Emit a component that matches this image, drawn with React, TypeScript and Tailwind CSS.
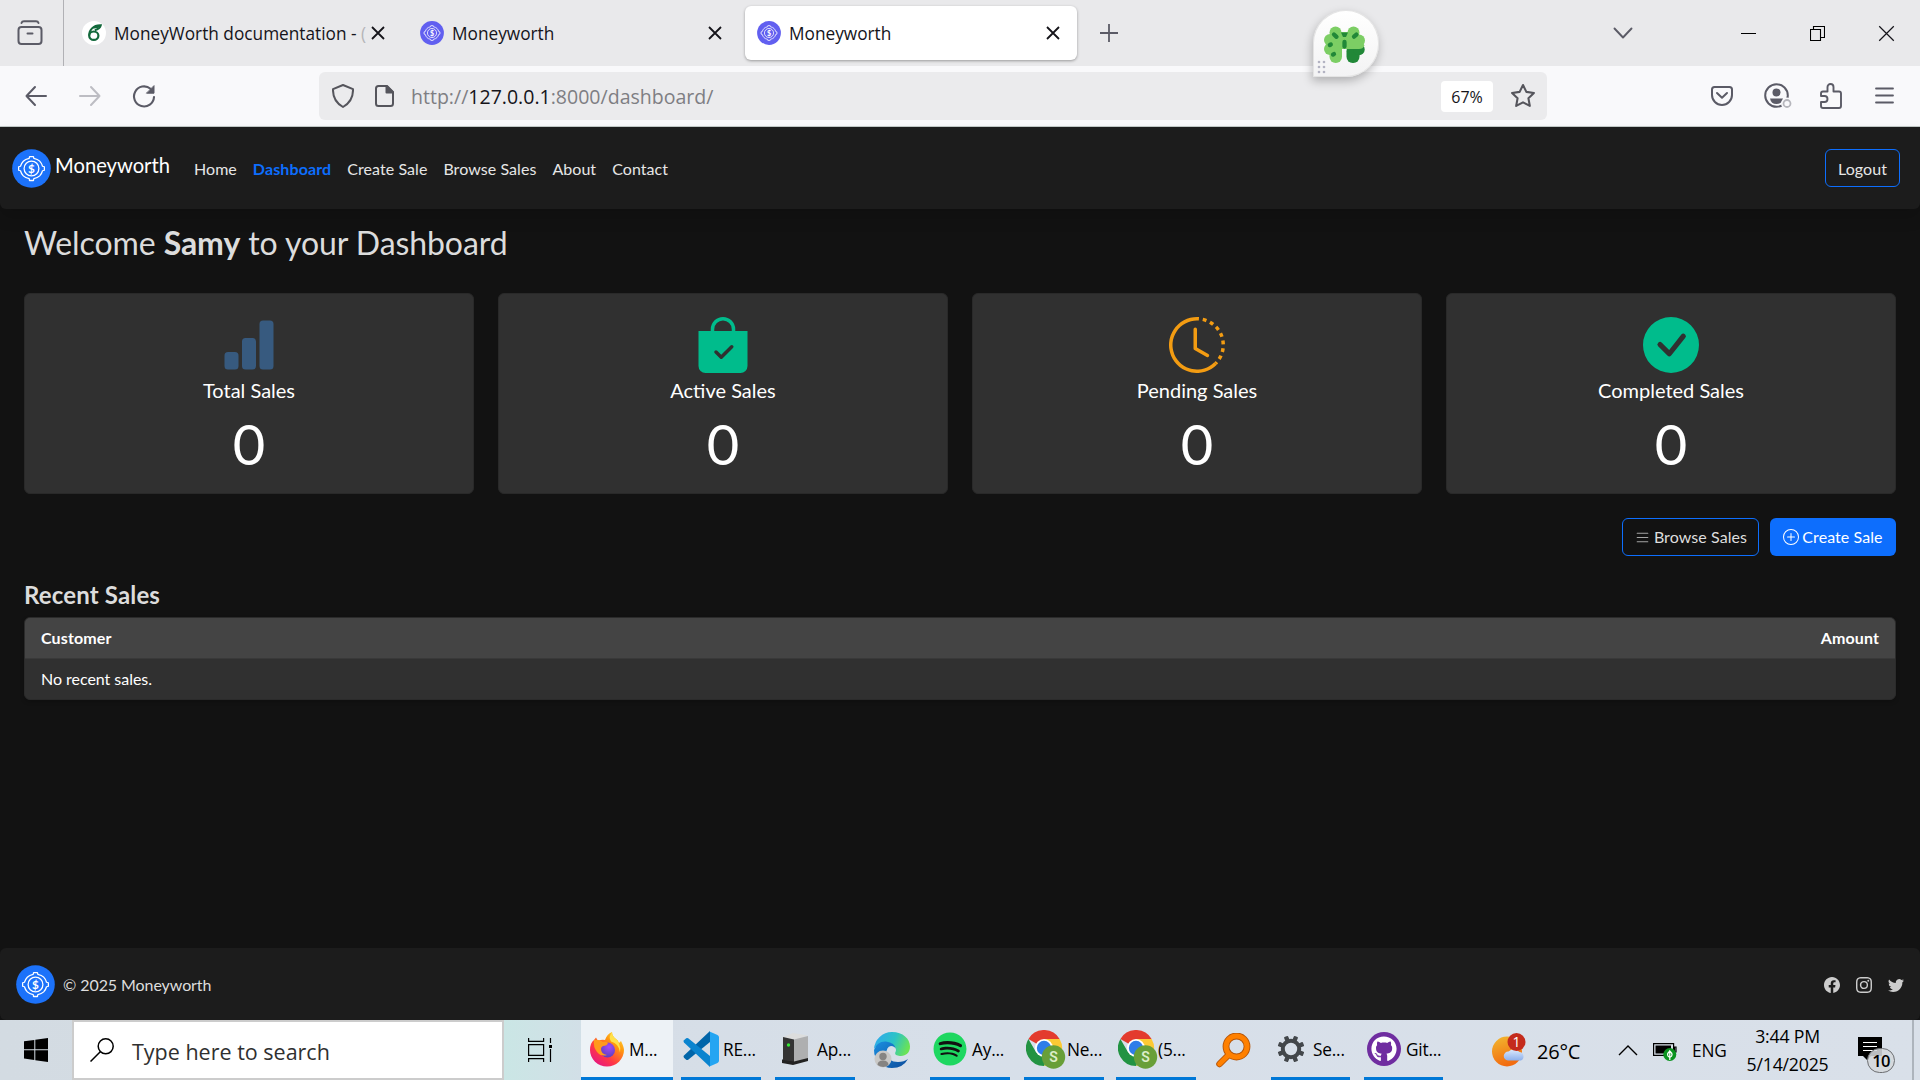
import type { ReactNode } from 'react';
import {
  BsBarChartFill, BsBagCheckFill, BsClockHistory, BsCheckCircleFill, BsList,
  BsPlusCircle, BsFacebook, BsInstagram, BsTwitter,
} from 'react-icons/bs';
import { FaGithub, FaSpotify } from 'react-icons/fa';

function CoinLogo({ size, bg }: { size: number; bg: string }) {
  return (
    <svg width={size} height={size} viewBox="0 0 40 40" className="shrink-0">
      <circle cx="20" cy="20" r="19.8" fill={bg} />
      <g fill="none" stroke="#fff" strokeWidth="1.3" strokeLinejoin="round">
        <path d="M17.6 9.6 18 7.8h4l.4 1.8q4 .8 6 2.9 2.100 2.200 2.900 5.200l1.900.5v3.600l-1.900.5q-.8 3.100-2.900 5.300-2.100 2.100-6 2.900l-.4 1.800h-4l-.4-1.800q-4-.8-6-2.900-2.100-2.200-2.900-5.300l-1.900-.5v-3.600l1.900-.5q.8-3 2.900-5.200 2-2.100 6-2.900Z" />
        <circle cx="20" cy="20" r="7.600" />
      </g>
      <text x="20" y="24.400" textAnchor="middle" fontSize="12" fontWeight="700" fontFamily="Lato, sans-serif" fill="#fff">$</text>
    </svg>
  );
}

function CloseX({ size = 14, w = 1.8 }: { size?: number; w?: number }) {
  return (
    <svg width={size} height={size} viewBox="0 0 14 14" className="shrink-0" stroke="#15141a" strokeWidth={w} fill="none">
      <path d="M1 1l12 12M13 1L1 13" />
    </svg>
  );
}

function BrowserTabs() {
  return (
    <div className="relative flex h-[66px] items-center bg-[#e9e9eb] text-[17.25px] text-[#15141a]">
      <div className="flex h-full w-16 items-center justify-center border-r border-[#b1b1b5] pr-1">
        <svg width="26" height="28" viewBox="0 0 26 26" fill="none" stroke="#5b5b66" strokeWidth="2" strokeLinecap="round">
          <path d="M4.500 3q.5-1.700 2.500-1.700h12q2 0 2.500 1.700" />
          <rect x="1.500" y="7" width="23" height="17" rx="3" />
          <path d="M10.500 13.500h5" />
        </svg>
      </div>
      <div className="flex h-full w-[342px] items-center pl-[18px]">
        <svg width="24" height="24" viewBox="0 0 24 24">
          <circle cx="12" cy="12" r="12" fill="#fff" />
          <ellipse cx="11.800" cy="14.700" rx="4.600" ry="4.200" fill="none" stroke="#13693c" strokeWidth="2.200" />
          <path d="M7.200 14.500C7 9.500 11 4 18.800 4.300c-.6 2.600-3 4.200-6 5" fill="none" stroke="#13693c" strokeWidth="2" />
          <path d="M10.500 7.500C13 4 16 3.600 19 4.200c-1 2.400-3.500 3.300-8.500 3.300Z" fill="#13693c" />
        </svg>
        <div className="ml-[8px] mt-[2px] w-[254px] overflow-hidden whitespace-pre">
          MoneyWorth documentation - <span className="text-[#b5b5b8]">(</span>
        </div>
        <div className="ml-[3px]"><CloseX /></div>
      </div>
      <div className="flex h-full w-[339px] items-center pl-[14px]">
        <CoinLogo size={24} bg="#615ff0" />
        <span className="ml-[8px] mt-[2px] flex-1">Moneyworth</span>
        <span className="mr-[23px]"><CloseX /></span>
      </div>
      <div className="flex h-[54px] w-[332px] items-center rounded-md bg-white pl-[12px] shadow-[0_1px_3px_rgba(0,0,0,0.35)]">
        <CoinLogo size={24} bg="#615ff0" />
        <span className="ml-[8px] mt-[2px] flex-1">Moneyworth</span>
        <span className="mr-[17px]"><CloseX /></span>
      </div>
      <svg width="20" height="20" viewBox="0 0 20 20" className="ml-[22px]" stroke="#5b5b66" strokeWidth="1.800"><path d="M10 1v18M1 10h18" /></svg>
      <div className="ml-auto flex items-center pr-[25px]">
        <svg width="20" height="12" viewBox="0 0 20 12" className="mr-[108px]" fill="none" stroke="#5b5b66" strokeWidth="1.900" strokeLinecap="round" strokeLinejoin="round"><path d="M1.500 1.500 10 10.500l8.500-9" /></svg>
        <div className="mr-[54px] h-px w-[15px] bg-black" />
        <svg width="15" height="15" viewBox="0 0 15 15" className="mr-[53px]" fill="none" stroke="#000" strokeWidth="1.100"><path d="M.5 3.500h10v11H.5zM3.500 3.500v-3h11v11h-4" /></svg>
        <CloseX size={17} w={1} />
      </div>
      <FloatingClover />
    </div>
  );
}

function FloatingClover() {
  return (
    <div className="absolute left-[1313px] top-[10px] z-10 h-[67px] w-[66px] rounded-full rounded-bl-[3px] border border-[#e4e4e4] bg-gradient-to-b from-white to-[#f3f3f4] shadow-[-1px_4px_10px_rgba(0,0,0,0.25)]">
      <svg width="64" height="65" viewBox="0 0 64 65">
        <g fill="#218838">
          <rect x="32.500" y="34" width="13" height="18" rx="6.200" />
          <circle cx="45" cy="38.500" r="5.700" />
        </g>
        <g fill="#7cce64">
          <circle cx="21.500" cy="21.500" r="6" /><circle cx="16" cy="29" r="6" /><circle cx="16" cy="38" r="6" />
          <circle cx="39.500" cy="21.500" r="6" /><circle cx="45" cy="29.500" r="6" />
          <rect x="16" y="21" width="29" height="17" rx="4" />
          <rect x="15.500" y="30" width="12.500" height="22" rx="6.200" />
          <path d="M26 36h4l2 2h13q4 0 5.500-3.500l-3-5H26Z" />
        </g>
        <g stroke="#218838" strokeWidth="4.300" strokeLinecap="round">
          <path d="m20 23.500 2.500 2.300M40 25.700l2.400-2.100M16.800 33.500l-1 .5M20 43l-1 .6M30.500 31v4.500" />
        </g>
        <path d="M27 21.500h7l-2 4.500h-3z" fill="#218838" />
        <g fill="#b3b3c2">
          {[51, 56, 61].map((y) => [5, 10].map((x) => <circle key={`${x}-${y}`} cx={x} cy={y} r="1.300" />))}
        </g>
      </svg>
    </div>
  );
}

function Toolbar() {
  return (
    <div className="flex h-[61px] items-center border-b border-[#c3cac8] bg-[#f9f9fb] pl-[25px] pr-[26px]">
      <svg width="22" height="22" viewBox="0 0 22 22" fill="none" stroke="#5b5b66" strokeWidth="2" strokeLinecap="round" strokeLinejoin="round"><path d="M21 11H1.500M10 2 1.500 11l8.500 9" /></svg>
      <svg width="22" height="22" viewBox="0 0 22 22" className="ml-[32px]" fill="none" stroke="#bdbdc3" strokeWidth="2" strokeLinecap="round" strokeLinejoin="round"><path d="M1 11h19.500M12 2l8.500 9-8.500 9" /></svg>
      <svg width="24" height="24" viewBox="0 0 24 24" className="ml-[31px]" fill="none" stroke="#5b5b66" strokeWidth="2.100" strokeLinecap="round"><path d="M22 13a10 10 0 1 1-3.500-8.200" /><path d="M22 2v7.200h-7.200z" fill="#5b5b66" strokeWidth="1" strokeLinejoin="round" /></svg>
      <div className="ml-[163px] flex h-12 w-[1228px] items-center rounded-md bg-[#ebebed] pl-[13px]">
        <svg width="22" height="24" viewBox="0 0 22 24" fill="none" stroke="#55555c" strokeWidth="2" strokeLinejoin="round"><path d="M11 1 21 5.200q.4 12-10 17.800Q.6 17.200 1 5.200Z" /></svg>
        <svg width="19" height="22" viewBox="0 0 19 22" className="ml-[21px]" fill="none" stroke="#55555c" strokeWidth="2" strokeLinejoin="round"><path d="M3.500 1H12l6 6v11.500q0 2.500-2.500 2.500h-12Q1 21 1 18.500v-15Q1 1 3.500 1Z" /><path d="M11.500 1v6.500H18z" fill="#55555c" /></svg>
        <div className="ml-[17px] mt-[2px] whitespace-nowrap text-[19.55px] leading-6 text-[#7e7e83]">
          http://<span className="text-[#15141a]">127.0.0.1</span>:8000/dashboard/
        </div>
        <div className="ml-auto flex h-[31px] w-[52px] items-center justify-center rounded bg-white pt-px text-[16px] text-[#15141a]">67%</div>
        <svg width="26" height="26" viewBox="0 0 24 24" className="ml-[17px] mr-[11px]" fill="none" stroke="#55555c" strokeWidth="1.900" strokeLinejoin="round"><path d="m12 1.800 3.100 6.400 7 1-5.100 4.900 1.300 7.100-6.300-3.400-6.300 3.400L7 14.100 1.900 9.200l7-1Z" /></svg>
      </div>
      <div className="ml-auto flex items-center">
        <svg width="22" height="22" viewBox="0 0 22 20" className="mr-[31px]" fill="none" stroke="#5b5b66" strokeWidth="2" strokeLinecap="round" strokeLinejoin="round"><path d="M3.500 1h15Q21 1 21 3.500V9a10 10 0 0 1-20 0V3.500Q1 1 3.500 1Z" /><path d="m6 7 5 4.800L16 7" /></svg>
        <svg width="28" height="26" viewBox="0 0 28 26" className="mr-[28px]"><circle cx="12.500" cy="12.500" r="11.300" fill="none" stroke="#5b5b66" strokeWidth="2" /><circle cx="12.500" cy="9.500" r="4" fill="#5b5b66" /><path d="M6 15.500h13q-1 5.500-6.500 5.500T6 15.500Z" fill="#5b5b66" /><circle cx="23" cy="20.500" r="6" fill="#f9f9fb" /><circle cx="23" cy="20.500" r="3.500" fill="none" stroke="#b6b6bc" strokeWidth="1.800" /></svg>
        <svg width="22" height="26" viewBox="0 0 22 26" className="mr-[33px]" fill="none" stroke="#5b5b66" strokeWidth="1.900" strokeLinejoin="round"><path d="M3 8.500h4.500V4a3 3 0 0 1 6 0v4.500H19q2 0 2 2V23q0 2-2 2H3q-2 0-2-2v-4h3.500a3 3 0 0 0 0-6H1v-2.500q0-2 2-2Z" /></svg>
        <svg width="19" height="17" viewBox="0 0 19 17" className="mb-[2px]" stroke="#5b5b66" strokeWidth="1.800" strokeLinecap="round"><path d="M1 1.500h17M1 8.500h17M1 15.500h17" /></svg>
      </div>
    </div>
  );
}

function SiteNav() {
  return (
    <nav className="flex h-[82px] items-center rounded-b-md bg-[#1c1c1c] pl-3 pr-5 text-[16px] tracking-[0.06px] text-[#e6e6e6] shadow-[0_8px_16px_rgba(0,0,0,0.15)]">
      <CoinLogo size={39} bg="#1c72fa" />
      <span className="mb-[5px] ml-[4px] text-[20.2px] tracking-normal text-white">Moneyworth</span>
      <div className="mt-[2px] flex gap-4 pl-[24px]">
        <span>Home</span>
        <span className="font-bold tracking-[0.12px] text-[#0d6efd]">Dashboard</span>
        <span>Create Sale</span>
        <span>Browse Sales</span>
        <span>About</span>
        <span>Contact</span>
      </div>
      <button className="ml-auto h-[38px] w-[75px] rounded-md border border-[#0d6efd] pt-[2px]">Logout</button>
    </nav>
  );
}

function StatCard({ icon, title }: { icon: ReactNode; title: string }) {
  return (
    <div className="flex h-[201px] flex-col items-center rounded-md border border-[#292929] bg-[#303030] pt-[23px] text-white">
      {icon}
      <div className="mt-[3px] text-[20px] leading-7">{title}</div>
      <div className="mt-[7px] text-[56px] leading-[66px]">0</div>
    </div>
  );
}

function Dashboard() {
  return (
    <main className="h-[739px] px-6 pt-[14px] text-[#dee2e6]">
      <h1 className="text-[32px] leading-[40px] tracking-[-0.08px] text-[#dcdcdc]">Welcome <b>Samy</b> to your Dashboard</h1>
      <div className="mt-[30px] grid grid-cols-4 gap-6">
        <StatCard icon={<BsBarChartFill size={56} color="#375a7f" />} title="Total Sales" />
        <StatCard icon={<BsBagCheckFill size={56} color="#00bc8c" />} title="Active Sales" />
        <StatCard icon={<BsClockHistory size={56} color="#f39c12" />} title="Pending Sales" />
        <StatCard icon={<BsCheckCircleFill size={56} color="#00bc8c" />} title="Completed Sales" />
      </div>
      <div className="mt-6 flex justify-end gap-[11px] text-[16px] tracking-[0.08px]">
        <button className="flex h-[38px] w-[137px] items-center justify-center gap-[3px] rounded-md border border-[#0d6efd] text-[#dedede]"><BsList size={17} color="#a5a5a5" /><span>Browse Sales</span></button>
        <button className="flex h-[38px] w-[126px] items-center justify-center gap-[3px] rounded-md bg-[#0d6efd] text-white"><BsPlusCircle size={16} /><span>Create Sale</span></button>
      </div>
      <h2 className="mt-[24px] text-[24px] font-bold leading-[29px] tracking-[0.15px] text-[#dcdcdc]">Recent Sales</h2>
      <div className="mt-[8px] overflow-hidden rounded-md border border-[#2b2b2b] bg-[#303030] text-[16px] text-white shadow-[0_2px_4px_rgba(0,0,0,0.2)]">
        <div className="flex h-[41px] items-center justify-between border-b border-[#393939] bg-[#444] px-4 font-bold tracking-[0.12px]"><span>Customer</span><span>Amount</span></div>
        <div className="flex h-[40px] items-center px-4 tracking-[-0.03px]">No recent sales.</div>
      </div>
    </main>
  );
}

function SiteFooter() {
  return (
    <footer className="flex h-[72px] items-center rounded-md bg-[#1c1c1c] px-4 text-[#dedede]">
      <CoinLogo size={39} bg="#1c72fa" />
      <span className="ml-2 mt-[2px] text-[16px] tracking-[-0.08px]">© 2025 Moneyworth</span>
      <div className="ml-auto mt-[2px] flex gap-4 text-[#ccc]"><BsFacebook size={16} /><BsInstagram size={16} /><BsTwitter size={16} /></div>
    </footer>
  );
}

function FirefoxIcon() {
  return (
    <svg width="34" height="36" viewBox="0 0 34 36" className="shrink-0">
      <defs>
        <linearGradient id="ffBody" x1="1" y1="0" x2="0.2" y2="1"><stop offset="0" stopColor="#fff44f" /><stop offset=".35" stopColor="#ff980e" /><stop offset=".7" stopColor="#ff3647" /><stop offset="1" stopColor="#e31587" /></linearGradient>
        <radialGradient id="ffCore" cx=".6" cy=".3" r=".7"><stop offset="0" stopColor="#a54bf5" /><stop offset="1" stopColor="#5b3fc0" /></radialGradient>
      </defs>
      <path d="M6 6.500 8 10q3-1.600 7-1Q17 3 22 1q0 4 4 7 2 1 3 4l2-2q3 6 3 9a17 16.500 0 0 1-34 0Q0 12 4 9Z" fill="url(#ffBody)" />
      <path d="M22 1q-4 5-1 9.500 8 2 9 11 1-5-1-9-1-3-3-4.500-4-3-4-7Z" fill="#ffe14a" />
      <circle cx="17.500" cy="19" r="7.500" fill="url(#ffCore)" />
      <path d="M4 9q5-1 9 2 4-1 5 1-1 3-5 3-2 1-2 3 0 5 6 6-6 2-10-3-4-5-3-12Z" fill="#ff9a1c" />
    </svg>
  );
}

function VsCodeIcon() {
  return (
    <svg width="36" height="36" viewBox="0 0 36 36" className="shrink-0">
      <path d="M27 0 1 24.500q-1 1 0 2.200l2.200 2q1 .8 2 0L27 11Z" fill="#0065a9" />
      <path d="M27 36 1 11.500q-1-1 0-2.200l2.200-2q1-.8 2 0L27 25Z" fill="#0a84cf" />
      <path d="M26.500.4 34.500 4Q36 4.800 36 6.300v23.400q0 1.500-1.500 2.300l-8 3.600q.5-.6.500-2V2.400q0-1.400-.5-2Z" fill="#24a5f2" />
    </svg>
  );
}

function ServerIcon() {
  return (
    <svg width="27" height="32" viewBox="0 0 27 32" className="shrink-0">
      <path d="m0 27 3-3 23 1v3l-15 4-11-2Z" fill="#222" />
      <path d="m1 4 10-4 15 2.500L14 7Z" fill="#dcdddd" />
      <path d="M1 4l11 2.500v22L1 27Z" fill="#343434" />
      <path d="M12 6.500 26 3v22l-14 3.500Z" fill="#aeafb0" />
      <circle cx="6.500" cy="12" r="1.700" fill="#35e735" />
    </svg>
  );
}

function EdgeIcon() {
  return (
    <svg width="36" height="36" viewBox="0 0 36 36">
      <defs>
        <linearGradient id="edTop" x1="0" y1=".2" x2="1" y2=".5"><stop offset="0" stopColor="#2fa9ee" /><stop offset=".55" stopColor="#2bc3c6" /><stop offset="1" stopColor="#6be354" /></linearGradient>
        <linearGradient id="edLow" x1="0" y1="0" x2="1" y2="1"><stop offset="0" stopColor="#1b8fe0" /><stop offset="1" stopColor="#0c4c9c" /></linearGradient>
      </defs>
      <path d="M0 17A18 18 0 0 1 18 0c11 0 18 7 18 14.500 0 6-4 9.500-9 9.500-4 0-7-1.500-5.500-4C23 17 21 13 15 12Q5 10 0 17Z" fill="url(#edTop)" />
      <path d="M0 18Q3 9 12 9.500q9 1 10 8-1-3.500-5-3.500-5 1-4.500 7.500Q14 30 24 30q6 0 10-3-5 9-16 9A18 18 0 0 1 0 18Z" fill="url(#edLow)" />
      <circle cx="9" cy="27" r="8.500" fill="#c9c8c6" />
      <circle cx="9" cy="24.500" r="3.700" fill="#868482" />
      <path d="M3.500 33q0-4.500 5.500-4.500t5.500 4.500q-5 4-11 0Z" fill="#868482" />
    </svg>
  );
}

function ChromeIcon() {
  return (
    <svg width="40" height="40" viewBox="0 0 40 40" className="mt-[2px] shrink-0">
      <path d="M18 18 2.400 9A18 18 0 0 1 33.600 9Z" fill="#e33b2e" />
      <path d="M18 9h15.600A18 18 0 0 1 18 36l7.800-13.500Z" fill="#fcc934" />
      <path d="M2.400 9 10.200 22.500 18 27l4.500-1L18 36A18 18 0 0 1 2.400 9Z" fill="#229342" />
      <circle cx="18" cy="18" r="9" fill="#fff" />
      <circle cx="18" cy="18" r="7.200" fill="#2f7de9" />
      <circle cx="27.500" cy="27" r="11.700" fill="#689f38" />
      <text x="27.500" y="32" textAnchor="middle" fontSize="14" fontWeight="600" fontFamily="Roboto, sans-serif" fill="#dcedc8">S</text>
    </svg>
  );
}

function GearIcon() {
  return (
    <svg width="28" height="28" viewBox="-14 -14 28 28" fill="#43474b" className="shrink-0">
      {[0, 45, 90, 135, 180, 225, 270, 315].map((a) => <rect key={a} x="-2.200" y="-13.500" width="4.400" height="5" rx=".8" transform={`rotate(${a + 22.5})`} />)}
      <circle r="8.200" fill="none" stroke="#43474b" strokeWidth="4" />
    </svg>
  );
}

function Task({ className, icon, label }: { className: string; icon: ReactNode; label: string }) {
  return (
    <div className={`flex h-full shrink-0 items-center overflow-hidden whitespace-nowrap border-b-[3px] border-[#0078d7] ${className}`}>
      {icon}
      <span className="mt-[3px]">{label}</span>
    </div>
  );
}

function Taskbar() {
  return (
    <div className="flex h-[60px] items-center bg-gradient-to-r from-[#d3dbe2] via-[#d7dfe9] to-[#d9e0e9] text-[17.25px] tracking-[-0.2px] text-black">
      <div className="flex w-[72px] shrink-0 justify-center">
        <svg width="24" height="24" viewBox="0 0 24 24"><path d="M0 3.300 10.300 2v9.300H0zM11.300 1.800 24 0v11.300H11.300zM0 12.300h10.300V22L0 20.600zM11.300 12.300H24V24l-12.700-1.800z" /></svg>
      </div>
      <div className="flex h-full w-[432px] shrink-0 items-center border-2 border-[#ccc] bg-white pl-4 text-[21.5px] tracking-normal text-[#303030]">
        <svg width="24" height="24" viewBox="0 0 24 24" fill="none" stroke="#000" strokeWidth="1.500"><circle cx="15.700" cy="8.300" r="7.500" /><path d="M10.300 13.700.5 23.500" /></svg>
        <span className="ml-[18px] mt-[4px]">Type here to search</span>
      </div>
      <div className="flex h-full w-[77px] shrink-0 items-center bg-gradient-to-r from-[#cae6e5] to-[#d2dfe7] pl-[24px]">
        <svg width="24" height="24" viewBox="0 0 24 24" fill="none" stroke="#000" strokeWidth="1.200"><path d="M.6 0v3.400h15V0M.6 6.600h15v10.800H.6zM.6 24v-3.400h15V24M22.500 0v5M22.500 11v13" /><path d="M21 7h3v3h-3z" fill="#000" stroke="none" /></svg>
      </div>
      <Task className="w-[92px] gap-[5px] bg-[#edf2f6] pl-[9px]" icon={<FirefoxIcon />} label="M..." />
      <Task className="ml-2 w-20 gap-[4px] pl-[2px]" icon={<VsCodeIcon />} label="RE..." />
      <Task className="ml-[14px] w-20 gap-[8px] pl-[7px]" icon={<ServerIcon />} label="Ap..." />
      <div className="flex w-[75px] shrink-0 pl-[19px]"><EdgeIcon /></div>
      <Task className="w-20 gap-[5px] pl-[3px]" icon={<div className="shrink-0 rounded-full bg-[radial-gradient(circle,#111_60%,transparent_61%)]"><FaSpotify size={34} color="#1ed760" /></div>} label="Ay..." />
      <Task className="ml-[14px] w-20 gap-[1px] pl-[2px]" icon={<ChromeIcon />} label="Ne..." />
      <Task className="ml-3 w-20 pl-[2px]" icon={<ChromeIcon />} label="(5..." />
      <div className="flex w-[75px] shrink-0 pl-[20px]">
        <svg width="35" height="35" viewBox="0 0 35 35" fill="none" strokeLinecap="round"><circle cx="20.500" cy="13.500" r="10.500" stroke="#b55407" strokeWidth="6.800" /><path d="M12.500 22 3.500 31" stroke="#b55407" strokeWidth="6.500" /><circle cx="20.500" cy="13.500" r="10.500" stroke="#ff8000" strokeWidth="5" /><path d="M13 21.500 3.500 31" stroke="#ff8000" strokeWidth="4.700" /></svg>
      </div>
      <Task className="w-[79px] gap-[8px] pl-[6px]" icon={<GearIcon />} label="Se..." />
      <Task className="ml-[14px] w-[79px] gap-[5px] pl-[3px]" icon={<div className="shrink-0 rounded-full bg-[#6f2da0] p-[4px]"><FaGithub size={26} color="#fff" /></div>} label="Git..." />
      <svg width="34" height="34" viewBox="0 0 34 34" className="ml-[49px] shrink-0">
        <defs>
          <linearGradient id="sun" x1="0" y1="0" x2="0.300" y2="1"><stop offset="0" stopColor="#f2b92f" /><stop offset="1" stopColor="#f26c10" /></linearGradient>
          <linearGradient id="cloud" x1="0" y1="0" x2="0" y2="1"><stop offset="0" stopColor="#dce9fb" /><stop offset="1" stopColor="#8db0ec" /></linearGradient>
        </defs>
        <circle cx="15" cy="18.500" r="15" fill="url(#sun)" />
        <path d="M16 27.500a4.500 4.500 0 0 1 .5-9q6-4.500 11 .5a4.500 4.500 0 0 1 1.500 8.500Z" fill="url(#cloud)" />
        <circle cx="24.500" cy="9" r="9" fill="#c42b1c" />
        <text x="24.300" y="14" textAnchor="middle" fontSize="14" fontFamily="Open Sans, sans-serif" fill="#fff">1</text>
      </svg>
      <span className="ml-[11px] mt-[3px] w-[81px] text-[20px]">26°C</span>
      <svg width="20" height="11" viewBox="0 0 20 11" fill="none" stroke="#000" strokeWidth="1.400" className="shrink-0"><path d="m1 10 9-9 9 9" /></svg>
      <svg width="24" height="20" viewBox="0 0 24 20" className="ml-[15px] mt-1 shrink-0">
        <path d="M.6 1.600h20v11.800H.6zM21.500 5h1.500v5h-1.500z" fill="none" stroke="#000" strokeWidth="1.200" />
        <path d="M2.500 3.500H18v8H2.500z" />
        <circle cx="16.800" cy="12.500" r="6.500" fill="#0b9420" />
        <path d="M16.800 9q-4.500 4 0 6.500 4.500-2.500 0-6.500v9" fill="none" stroke="#fff" strokeWidth="1.200" />
      </svg>
      <span className="ml-[15px] mt-[2px] w-[53px]">ENG</span>
      <div className="w-[85px] text-center text-[17.7px] leading-[28px]"><div>3:44 PM</div><div>5/14/2025</div></div>
      <svg width="40" height="40" viewBox="0 0 40 40" className="ml-[28px] mt-[12px] shrink-0">
        <path d="M0 1h24v19H13l-4 4-4-4H0Z" />
        <path d="M5 6.500h14M5 10.500h14M5 14.500h14" stroke="#fff" strokeWidth="1.200" />
        <rect x="9.500" y="12.500" width="27" height="24" rx="12" fill="#d4d7db" fillOpacity=".88" stroke="#6d6f72" />
        <text x="23" y="30.500" textAnchor="middle" fontSize="16.500" fontWeight="600" letterSpacing="-.7" fontFamily="Open Sans, sans-serif">10</text>
      </svg>
      <div className="ml-auto mr-[6px] h-full w-[2px] bg-[#adb4bc]" />
    </div>
  );
}

export default function App() {
  return (
    <div className="flex h-[1080px] w-[1920px] flex-col overflow-hidden bg-[#121212] font-['Open_Sans',sans-serif]">
      <BrowserTabs />
      <Toolbar />
      <div className="font-['Lato',sans-serif]">
        <SiteNav />
        <Dashboard />
        <SiteFooter />
      </div>
      <Taskbar />
    </div>
  );
}
